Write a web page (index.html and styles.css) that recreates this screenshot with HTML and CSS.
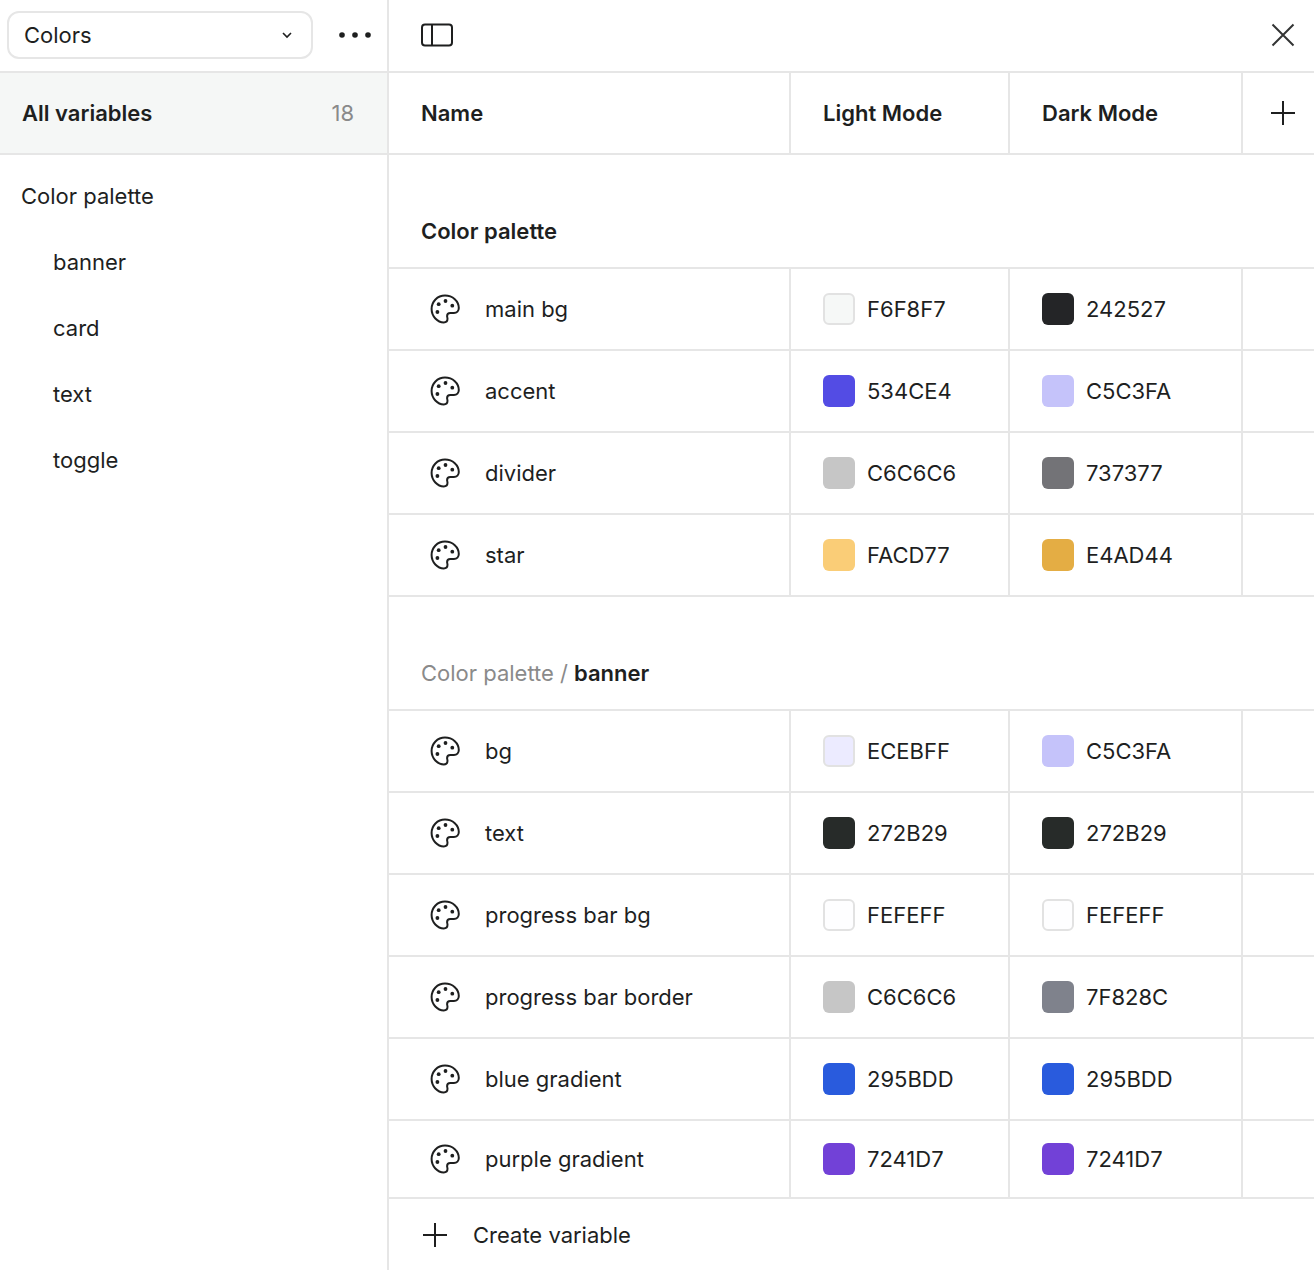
FILE: index.html
```html
<!DOCTYPE html>
<html lang="en">
<head>
<meta charset="utf-8">
<title>Variables</title>
<link rel="stylesheet" href="styles.css">
</head>
<body>
<svg class="defs" width="0" height="0" aria-hidden="true">
  <symbol id="palette" viewBox="0 0 30 30">
    <path d="M15 1.6C7.4 1.6 1.6 7.5 1.6 15c0 7.4 5.9 13.4 12.2 13.4 2.6 0 3.7-1.7 3.7-3.6 0-1-.4-1.8-.4-2.8 0-1.8 1.4-3 3.2-3h3.6c3 0 4.9-2.3 4.9-5C28.800 7 22.700 1.600 15 1.600Z" fill="none" stroke="currentColor" stroke-width="2" stroke-linejoin="round"/>
    <circle cx="15.500" cy="7" r="1.900" fill="currentColor"/>
    <circle cx="22.300" cy="11.700" r="1.900" fill="currentColor"/>
    <circle cx="8.700" cy="10.200" r="1.900" fill="currentColor"/>
    <circle cx="7.400" cy="18" r="1.900" fill="currentColor"/>
  </symbol>
</svg>
<div class="app">
  <aside class="side">
    <div class="side-top">
      <div class="select">
        <span>Colors</span>
        <svg class="chev" width="12" height="8" viewBox="0 0 12 8"><path d="M2 2l4 4 4-4" fill="none" stroke="currentColor" stroke-width="1.600"/></svg>
      </div>
      <svg class="dots" width="32" height="6" viewBox="0 0 32 6"><circle cx="3" cy="3" r="2.800"/><circle cx="16" cy="3" r="2.800"/><circle cx="29" cy="3" r="2.800"/></svg>
    </div>
    <div class="all"><span>All variables</span><span class="count">18</span></div>
    <nav class="nav">
      <div class="nav-item">Color palette</div>
      <div class="nav-item sub">banner</div>
      <div class="nav-item sub">card</div>
      <div class="nav-item sub">text</div>
      <div class="nav-item sub">toggle</div>
    </nav>
  </aside>
  <main class="main">
    <div class="main-top">
      <svg width="32" height="24" viewBox="0 0 32 24"><rect x="1" y="1.500" width="30" height="21" rx="3" fill="none" stroke="currentColor" stroke-width="2"/><path d="M11 1.500v21" stroke="currentColor" stroke-width="2"/></svg>
      <svg width="24" height="24" viewBox="0 0 24 24"><path d="M1.500 1.500l21 21M22.500 1.500l-21 21" stroke="currentColor" stroke-width="2" opacity=".9"/></svg>
    </div>
    <div class="row head">
      <div class="cell name">Name</div>
      <div class="cell">Light Mode</div>
      <div class="cell">Dark Mode</div>
      <div class="cell add"><svg width="24" height="24" viewBox="0 0 24 24"><path d="M12 0v24M0 12h24" stroke="currentColor" stroke-width="2"/></svg></div>
    </div>
    <div class="group"><b>Color palette</b></div>
    <div class="row">
      <div class="cell name"><svg class="pal"><use href="#palette"/></svg>main bg</div>
      <div class="cell"><i class="sw lined c-f6f8f7"></i>F6F8F7</div>
      <div class="cell"><i class="sw c-242527"></i>242527</div>
      <div class="cell"></div>
    </div>
    <div class="row">
      <div class="cell name"><svg class="pal"><use href="#palette"/></svg>accent</div>
      <div class="cell"><i class="sw c-534ce4"></i>534CE4</div>
      <div class="cell"><i class="sw c-c5c3fa"></i>C5C3FA</div>
      <div class="cell"></div>
    </div>
    <div class="row">
      <div class="cell name"><svg class="pal"><use href="#palette"/></svg>divider</div>
      <div class="cell"><i class="sw c-c6c6c6"></i>C6C6C6</div>
      <div class="cell"><i class="sw c-737377"></i>737377</div>
      <div class="cell"></div>
    </div>
    <div class="row">
      <div class="cell name"><svg class="pal"><use href="#palette"/></svg>star</div>
      <div class="cell"><i class="sw c-facd77"></i>FACD77</div>
      <div class="cell"><i class="sw c-e4ad44"></i>E4AD44</div>
      <div class="cell"></div>
    </div>
    <div class="group"><span class="crumb">Color palette /</span> <b>banner</b></div>
    <div class="row">
      <div class="cell name"><svg class="pal"><use href="#palette"/></svg>bg</div>
      <div class="cell"><i class="sw lined c-ecebff"></i>ECEBFF</div>
      <div class="cell"><i class="sw c-c5c3fa"></i>C5C3FA</div>
      <div class="cell"></div>
    </div>
    <div class="row">
      <div class="cell name"><svg class="pal"><use href="#palette"/></svg>text</div>
      <div class="cell"><i class="sw c-272b29"></i>272B29</div>
      <div class="cell"><i class="sw c-272b29"></i>272B29</div>
      <div class="cell"></div>
    </div>
    <div class="row">
      <div class="cell name"><svg class="pal"><use href="#palette"/></svg>progress bar bg</div>
      <div class="cell"><i class="sw lined c-fefeff"></i>FEFEFF</div>
      <div class="cell"><i class="sw lined c-fefeff"></i>FEFEFF</div>
      <div class="cell"></div>
    </div>
    <div class="row">
      <div class="cell name"><svg class="pal"><use href="#palette"/></svg>progress bar border</div>
      <div class="cell"><i class="sw c-c6c6c6"></i>C6C6C6</div>
      <div class="cell"><i class="sw c-7f828c"></i>7F828C</div>
      <div class="cell"></div>
    </div>
    <div class="row">
      <div class="cell name"><svg class="pal"><use href="#palette"/></svg>blue gradient</div>
      <div class="cell"><i class="sw c-295bdd"></i>295BDD</div>
      <div class="cell"><i class="sw c-295bdd"></i>295BDD</div>
      <div class="cell"></div>
    </div>
    <div class="row last">
      <div class="cell name"><svg class="pal"><use href="#palette"/></svg>purple gradient</div>
      <div class="cell"><i class="sw c-7241d7"></i>7241D7</div>
      <div class="cell"><i class="sw c-7241d7"></i>7241D7</div>
      <div class="cell"></div>
    </div>
    <div class="create"><svg width="24" height="24" viewBox="0 0 24 24"><path d="M12 0v24M0 12h24" stroke="currentColor" stroke-width="2"/></svg>Create variable</div>
  </main>
</div>
</body>
</html>
```
FILE: styles.css
```css
* { box-sizing: border-box; }
html, body { margin: 0; height: 100%; background: #fff; }
body {
  font-family: Inter, "Liberation Sans", sans-serif;
  font-size: 22px;
  color: #1e1f1f;
  overflow: hidden;
}
.defs { position: absolute; }
.app { display: flex; height: 1270px; }
.side { width: 389px; flex: none; border-right: 2px solid #e6e6e6; }
.side-top {
  height: 73px;
  border-bottom: 2px solid #e6e6e6;
  display: flex;
  align-items: center;
  padding: 0 16px 2px 7px;
  justify-content: space-between;
}
.select {
  width: 306px;
  height: 48px;
  border: 2px solid #e6e6e6;
  border-radius: 12px;
  display: flex;
  align-items: center;
  justify-content: space-between;
  padding: 0 18px 0 15px;
}
.dots { fill: #1e1f1f; }
.all {
  height: 82px;
  background: #f5f7f6;
  border-bottom: 2px solid #e6e6e6;
  display: flex;
  align-items: center;
  justify-content: space-between;
  padding: 0 33px 0 22px;
  font-weight: 600;
}
.count { font-weight: 400; color: #8a8a8a; }
.nav { padding-top: 8px; }
.nav-item { height: 66px; display: flex; align-items: center; padding-left: 21px; }
.nav-item.sub { padding-left: 53px; }
.main { flex: 1; min-width: 0; }
.main-top {
  height: 73px;
  border-bottom: 2px solid #e6e6e6;
  display: flex;
  align-items: center;
  justify-content: space-between;
  padding: 0 19px 2px 32px;
}
.row {
  display: grid;
  grid-template-columns: 402px 219px 233px 1fr;
  height: 82px;
  border-bottom: 2px solid #e6e6e6;
}
.row.head { font-weight: 600; }
.row.last { height: 78px; }
.cell {
  display: flex;
  align-items: center;
  padding-left: 32px;
  border-right: 2px solid #e6e6e6;
}
.cell:last-child { border-right: 0; }
.cell.add { padding-left: 28px; }
.pal { width: 30px; height: 30px; flex: none; margin: 0 25px 0 9px; }
.sw {
  width: 32px;
  height: 32px;
  flex: none;
  border-radius: 6px;
  margin-right: 12px;
}
.sw.lined { border: 2px solid #e2e2e2; }
.c-f6f8f7 { background: #f6f8f7; }
.c-242527 { background: #242527; }
.c-534ce4 { background: #534ce4; }
.c-c5c3fa { background: #c5c3fa; }
.c-c6c6c6 { background: #c6c6c6; }
.c-737377 { background: #737377; }
.c-facd77 { background: #facd77; }
.c-e4ad44 { background: #e4ad44; }
.c-ecebff { background: #ecebff; }
.c-272b29 { background: #272b29; }
.c-fefeff { background: #fefeff; }
.c-7f828c { background: #7f828c; }
.c-295bdd { background: #295bdd; }
.c-7241d7 { background: #7241d7; }
.group {
  height: 114px;
  border-bottom: 2px solid #e6e6e6;
  padding: 0 0 23px 32px;
  display: flex;
  align-items: flex-end;
  gap: 6px;
}
.group b { font-weight: 600; }
.crumb { color: #8a8a8a; }
.create {
  height: 71px;
  display: flex;
  align-items: center;
  padding-left: 34px;
  gap: 26px;
}
```
